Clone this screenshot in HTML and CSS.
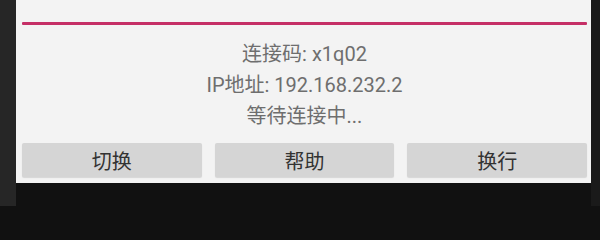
FILE: index.html
```html
<!DOCTYPE html>
<html>
<head>
<meta charset="utf-8">
<link rel="stylesheet" href="styles.css">
</head>
<body>
<div class="screen">
  <div class="edge-left"></div>
  <div class="main">
    <div class="panel">
      <div class="input-line"></div>
      <div class="info">
        <div class="info-row">连接码: x1q02</div>
        <div class="info-row">IP地址: 192.168.232.2</div>
        <div class="info-row">等待连接中...</div>
      </div>
      <div class="buttons">
        <div class="btn">切换</div>
        <div class="btn">帮助</div>
        <div class="btn">换行</div>
      </div>
    </div>
    <div class="below"></div>
  </div>
  <div class="edge-right"></div>
</div>
</body>
</html>
```

FILE: styles.css
```css
html, body {
  margin: 0;
  padding: 0;
  background: #111111;
}
.screen {
  width: 600px;
  height: 206px;
  display: flex;
  overflow: hidden;
  font-family: Roboto, "Noto Sans CJK SC", sans-serif;
}
.edge-left {
  width: 16px;
  flex: none;
  background: #262626;
}
.edge-right {
  width: 9px;
  flex: none;
  background: #1a1a1a;
}
.main {
  flex: 1;
  display: flex;
  flex-direction: column;
}
.panel {
  height: 183px;
  box-sizing: border-box;
  background: #f3f3f3;
  padding: 22px 4px 0 6px;
  display: flex;
  flex-direction: column;
}
.below {
  flex: 1;
  background: #111111;
}
.input-line {
  height: 3px;
  background: #c52f66;
  border-radius: 1px;
}
.info {
  margin-top: 14px;
  display: flex;
  flex-direction: column;
  align-items: center;
  color: #6e6e6e;
  font-size: 20px;
  line-height: 31px;
}
.buttons {
  margin-top: 11px;
  display: grid;
  grid-template-columns: 1fr 1fr 1fr;
  gap: 13px;
}
.btn {
  height: 34px;
  background: #d5d5d5;
  border-radius: 2px;
  box-shadow: 0 1px 1px rgba(0,0,0,0.12);
  display: flex;
  align-items: center;
  justify-content: center;
  color: #333333;
  font-size: 20px;
}
```
